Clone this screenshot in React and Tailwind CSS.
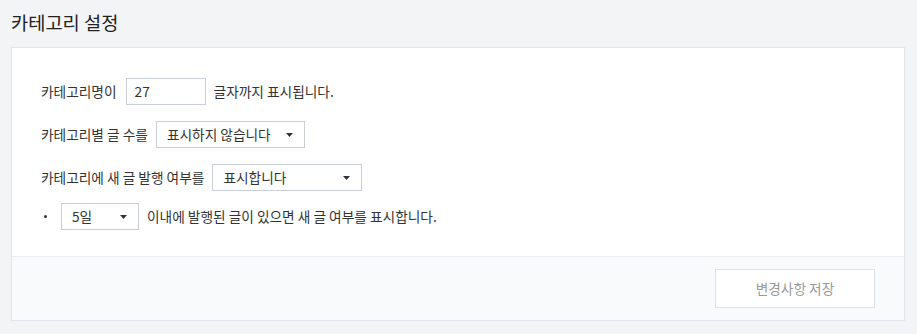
import React from 'react';

const FONT = { fontFamily: '"Noto Sans CJK KR", "Noto Sans", sans-serif' };

// 작은 드롭다운 화살표
function Caret() {
  return (
    <svg width="7" height="4" viewBox="0 0 7 4" className="shrink-0">
      <path d="M0 0h7L3.5 4z" fill="#333" />
    </svg>
  );
}

function SelectBox({ value, width }) {
  return (
    <div
      className={`flex h-[27px] items-center justify-between border border-[#c9ced8] bg-white pl-[10px] pr-[11px] text-[13.7px] text-[#333] ${width}`}
    >
      <span>{value}</span>
      <Caret />
    </div>
  );
}

export default function App() {
  return (
    <div className="min-h-[334px] w-full bg-[#f3f4f6] px-[11px] pt-[8px] pb-[13px]" style={FONT}>
      <h1 className="text-[18.7px] leading-[28px] text-[#222]">카테고리 설정</h1>

      <div className="mt-[11px] w-[894px] border border-[#e1e4ea] bg-white">
        {/* 설정 항목 */}
        <div className="flex flex-col pt-[30px] pb-[26px] pl-[29px] text-[13.7px] text-[#333]">
          <div className="flex items-center">
            <span>카테고리명이</span>
            <div className="ml-[9px] flex h-[27px] w-[80px] items-center border border-[#c9ced8] px-[8px]">27</div>
            <span className="ml-[8px]">글자까지 표시됩니다.</span>
          </div>

          <div className="mt-[16px] flex items-center">
            <span>카테고리별 글 수를</span>
            <div className="ml-[8px]">
              <SelectBox value="표시하지 않습니다" width="w-[149px]" />
            </div>
          </div>

          <div className="mt-[16px] flex items-center">
            <span>카테고리에 새 글 발행 여부를</span>
            <div className="ml-[8px]">
              <SelectBox value="표시합니다" width="w-[150px]" />
            </div>
          </div>

          <div className="mt-[12px] flex items-center">
            <span className="ml-[3px] h-[3px] w-[3px] rounded-full bg-[#333]" />
            <div className="ml-[14px]">
              <SelectBox value="5일" width="w-[78px]" />
            </div>
            <span className="ml-[8px]">이내에 발행된 글이 있으면 새 글 여부를 표시합니다.</span>
          </div>
        </div>

        {/* 하단 저장 영역 */}
        <div className="flex justify-end border-t border-[#eceef2] bg-[#f9fafb] pt-[12px] pb-[12px] pr-[29px]">
          <button className="h-[39px] w-[160px] border border-[#dde1e8] bg-white text-[13.7px] text-[#999]">
            변경사항 저장
          </button>
        </div>
      </div>
    </div>
  );
}
